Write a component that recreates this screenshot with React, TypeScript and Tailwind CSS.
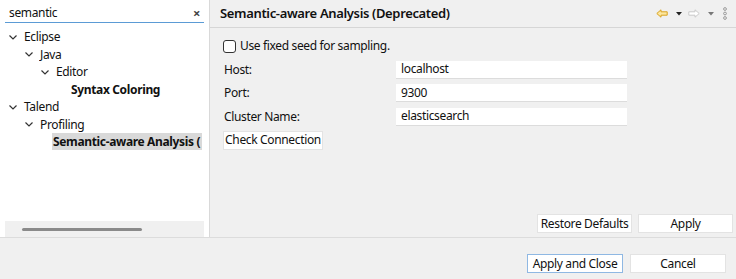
import React from 'react';

const font = { fontFamily: '"Noto Sans", "Open Sans", sans-serif' };

function Chevron() {
  return (
    <svg width="10" height="10" viewBox="0 0 10 10" className="shrink-0">
      <path d="M1.5 3.5 L5 7 L8.5 3.5" fill="none" stroke="#333" strokeWidth="1.2" />
    </svg>
  );
}

function TreeRow({ indent, label, open, bold, selected }: { indent: number; label: string; open?: boolean; bold?: boolean; selected?: boolean }) {
  return (
    <div className="flex items-center h-[17.5px]" style={{ paddingLeft: indent }}>
      {open ? <span className="w-[15px] flex items-center"><Chevron /></span> : null}
      <span className={`whitespace-nowrap overflow-hidden leading-[17px] pl-[1px] pr-[2px] ${bold ? 'font-bold' : ''} ${selected ? 'bg-[#d9d9d9] flex-1' : ''}`}>
        {label}
      </span>
    </div>
  );
}

function ArrowLeft() {
  return (
    <svg width="12" height="9" viewBox="0 0 12 9">
      <path
        d="M0.8 4.5 L5 0.8 L5 2.8 L11.2 2.8 L11.2 6.2 L5 6.2 L5 8.2 Z"
        fill="#fce7a0"
        stroke="#d9a21f"
        strokeWidth="1"
        strokeLinejoin="round"
      />
    </svg>
  );
}

function ArrowRight() {
  return (
    <svg width="12" height="9" viewBox="0 0 12 9">
      <path
        d="M11.2 4.5 L7 0.8 L7 2.8 L0.8 2.8 L0.8 6.2 L7 6.2 L7 8.2 Z"
        fill="#fff"
        stroke="#c9c9c9"
        strokeWidth="1"
        strokeLinejoin="round"
      />
    </svg>
  );
}

function Drop({ color }: { color: string }) {
  return (
    <svg width="6" height="4" viewBox="0 0 6 4">
      <path d="M0 0 L6 0 L3 3.5 Z" fill={color} />
    </svg>
  );
}

function Button({ label, w, focused }: { label: string; w: string; focused?: boolean }) {
  return (
    <div
      className={`${w} h-[19px] flex items-center justify-center whitespace-nowrap bg-white border ${focused ? 'border-[#8fb8e3]' : 'border-[#e3e3e3]'} text-[12px] leading-none`}
    >
      {label}
    </div>
  );
}

function Field({ label, value }: { label: string; value: string }) {
  return (
    <div className="flex items-center h-[23.5px]">
      <span className="w-[186px] pl-[14px] leading-[16px]">{label}</span>
      <div className="w-[231px] h-[18px] bg-white border-b border-[#dcdcdc] flex items-center pl-[5px]">{value}</div>
    </div>
  );
}

export default function App() {
  return (
    <div className="w-[736px] h-[279px] flex flex-col bg-[#f0f0f0] text-[12px] tracking-[-0.35px] text-[#111] overflow-hidden" style={font}>
      <div className="flex h-[237px]">
        {/* Left tree panel */}
        <div className="w-[210px] shrink-0 bg-white border-r border-[#d9d9d9] flex flex-col overflow-hidden">
          <div className="mx-[5px] mt-[4px] h-[19px] border-b border-[#5b9bd5] flex items-center justify-between pl-[4px] pr-[4px]">
            <span>semantic</span>
            <span className="text-[#444] text-[13px] font-bold leading-none">×</span>
          </div>
          <div className="mt-[5px] mr-[7px] overflow-hidden">
            <TreeRow indent={8} label="Eclipse" open />
            <TreeRow indent={24} label="Java" open />
            <TreeRow indent={40} label="Editor" open />
            <TreeRow indent={70} label="Syntax Coloring" bold />
            <TreeRow indent={8} label="Talend" open />
            <TreeRow indent={24} label="Profiling" open />
            <TreeRow indent={52} label="Semantic-aware Analysis (" bold selected />
          </div>
          <div className="mt-auto mx-[5px] h-[16px] bg-[#f0f0f0] flex items-center">
            <div className="ml-[17px] w-[120px] h-[3px] rounded-full bg-[#8a8a8a]" />
          </div>
        </div>

        {/* Right preference page */}
        <div className="flex-1 flex flex-col">
          <div className="h-[28px] border-b border-[#d6d6d6] flex items-center pl-[10px] pr-[9px]">
            <span className="text-[13px] font-semibold">Semantic-aware Analysis (Deprecated)</span>
            <div className="ml-auto flex items-center">
              <ArrowLeft />
              <span className="ml-[8px]"><Drop color="#222" /></span>
              <span className="ml-[6px]"><ArrowRight /></span>
              <span className="ml-[8px]"><Drop color="#777" /></span>
              <svg width="4" height="13" viewBox="0 0 4 13" className="ml-[9px]">
                <circle cx="2" cy="2" r="1.4" fill="none" stroke="#888" strokeWidth="0.8" />
                <circle cx="2" cy="6.5" r="1.4" fill="none" stroke="#888" strokeWidth="0.8" />
                <circle cx="2" cy="11" r="1.4" fill="none" stroke="#888" strokeWidth="0.8" />
              </svg>
            </div>
          </div>

          <div className="pt-[9px]">
            <div className="flex items-center h-[18px] pl-[13px] gap-[4px]">
              <div className="w-[13px] h-[13px] rounded-[3px] border border-[#333] bg-white" />
              <span>Use fixed seed for sampling.</span>
            </div>
            <div className="mt-[3px] flex flex-col">
              <Field label="Host:" value="localhost" />
              <Field label="Port:" value="9300" />
              <Field label="Cluster Name:" value="elasticsearch" />
            </div>
            <div className="mt-[2px] ml-[13px]">
              <Button label="Check Connection" w="w-[100px]" />
            </div>
          </div>

          <div className="mt-auto flex justify-end gap-[6px] pr-[3px] pb-[4px]">
            <Button label="Restore Defaults" w="w-[95px]" />
            <Button label="Apply" w="w-[95px]" />
          </div>
        </div>
      </div>

      {/* Bottom bar */}
      <div className="flex-1 border-t border-[#dcdcdc] flex justify-end items-start gap-[7px] pt-[16px] pr-[10px]">
        <Button label="Apply and Close" w="w-[96px]" focused />
        <Button label="Cancel" w="w-[96px]" />
      </div>
    </div>
  );
}
